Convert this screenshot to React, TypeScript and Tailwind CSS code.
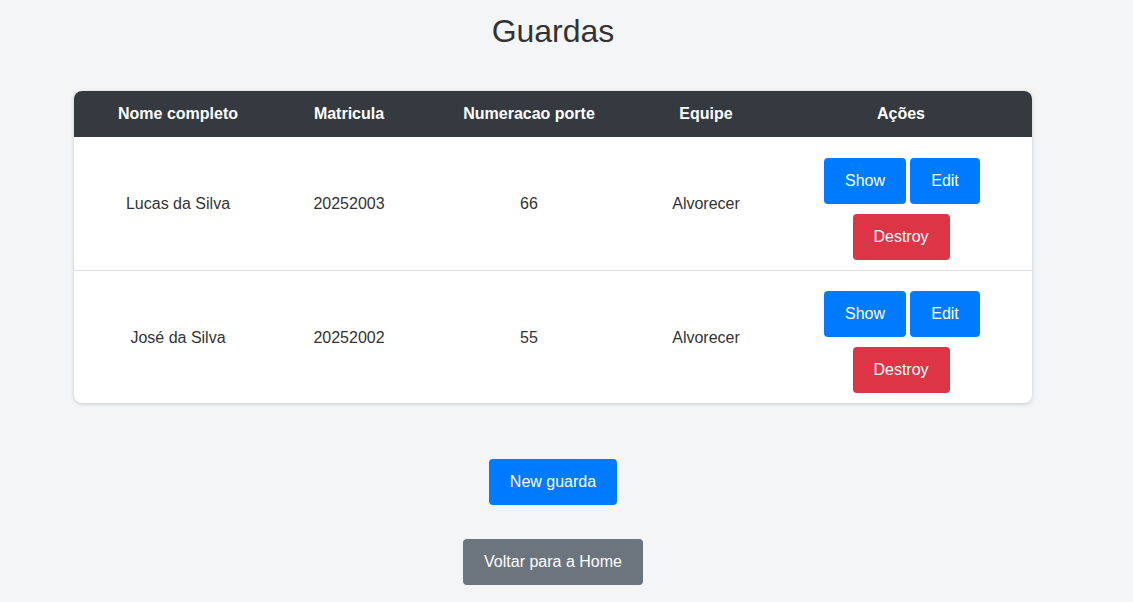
import React from "react";

const rows = [
  { nome: "Lucas da Silva", matricula: "20252003", numeracao: "66", equipe: "Alvorecer" },
  { nome: "José da Silva", matricula: "20252002", numeracao: "55", equipe: "Alvorecer" },
];

export default function App() {
  return (
    <div className="min-h-[602px] bg-[#f4f5f7] text-[#333] [font-family:'Liberation_Sans',Arial,sans-serif]">
      <div className="w-[1106px] flex flex-col items-center pt-[12px]">
        <h1 className="text-[32px] leading-[38px] font-normal text-[#333]">Guardas</h1>
        <div className="mt-[41px] w-[958px] rounded-[8px] overflow-hidden bg-white shadow-[0_1px_4px_rgba(0,0,0,0.18)]">
          <table className="w-full border-collapse table-fixed">
            <colgroup>
              <col className="w-[208px]" />
              <col className="w-[134px]" />
              <col className="w-[226px]" />
              <col className="w-[128px]" />
              <col className="w-[262px]" />
            </colgroup>
            <thead>
              <tr className="bg-[#343a40] text-white h-[46px]">
                <th className="text-[16px] font-bold text-center">Nome completo</th>
                <th className="text-[16px] font-bold text-center">Matricula</th>
                <th className="text-[16px] font-bold text-center">Numeracao porte</th>
                <th className="text-[16px] font-bold text-center">Equipe</th>
                <th className="text-[16px] font-bold text-center">Ações</th>
              </tr>
            </thead>
            <tbody>
              {rows.map((r, i) => (
                <tr key={i} className={i > 0 ? "border-t border-[#dee2e6] h-[133px]" : "h-[133px]"}>
                  <td className="text-center text-[16px] text-[#333] pt-[2px]">{r.nome}</td>
                  <td className="text-center text-[16px] text-[#333] pt-[2px]">{r.matricula}</td>
                  <td className="text-center text-[16px] text-[#333] pt-[2px]">{r.numeracao}</td>
                  <td className="text-center text-[16px] text-[#333] pt-[2px]">{r.equipe}</td>
                  <td className="text-center pt-[11px]">
                    <div className="flex flex-col items-center gap-[10px]">
                      <div className="flex gap-[4px] pl-[2px]">
                        <button className="h-[46px] w-[82px] rounded-[4px] bg-[#007bff] text-white text-[16px]">Show</button>
                        <button className="h-[46px] w-[70px] rounded-[4px] bg-[#007bff] text-white text-[16px]">Edit</button>
                      </div>
                      <button className="h-[46px] w-[97px] rounded-[4px] bg-[#dc3545] text-white text-[16px]">Destroy</button>
                    </div>
                  </td>
                </tr>
              ))}
            </tbody>
          </table>
        </div>
        <button className="mt-[56px] h-[46px] w-[128px] rounded-[4px] bg-[#007bff] text-white text-[16px]">New guarda</button>
        <button className="mt-[34px] h-[46px] w-[180px] rounded-[4px] bg-[#6c757d] text-white text-[16px]">Voltar para a Home</button>
      </div>
    </div>
  );
}
